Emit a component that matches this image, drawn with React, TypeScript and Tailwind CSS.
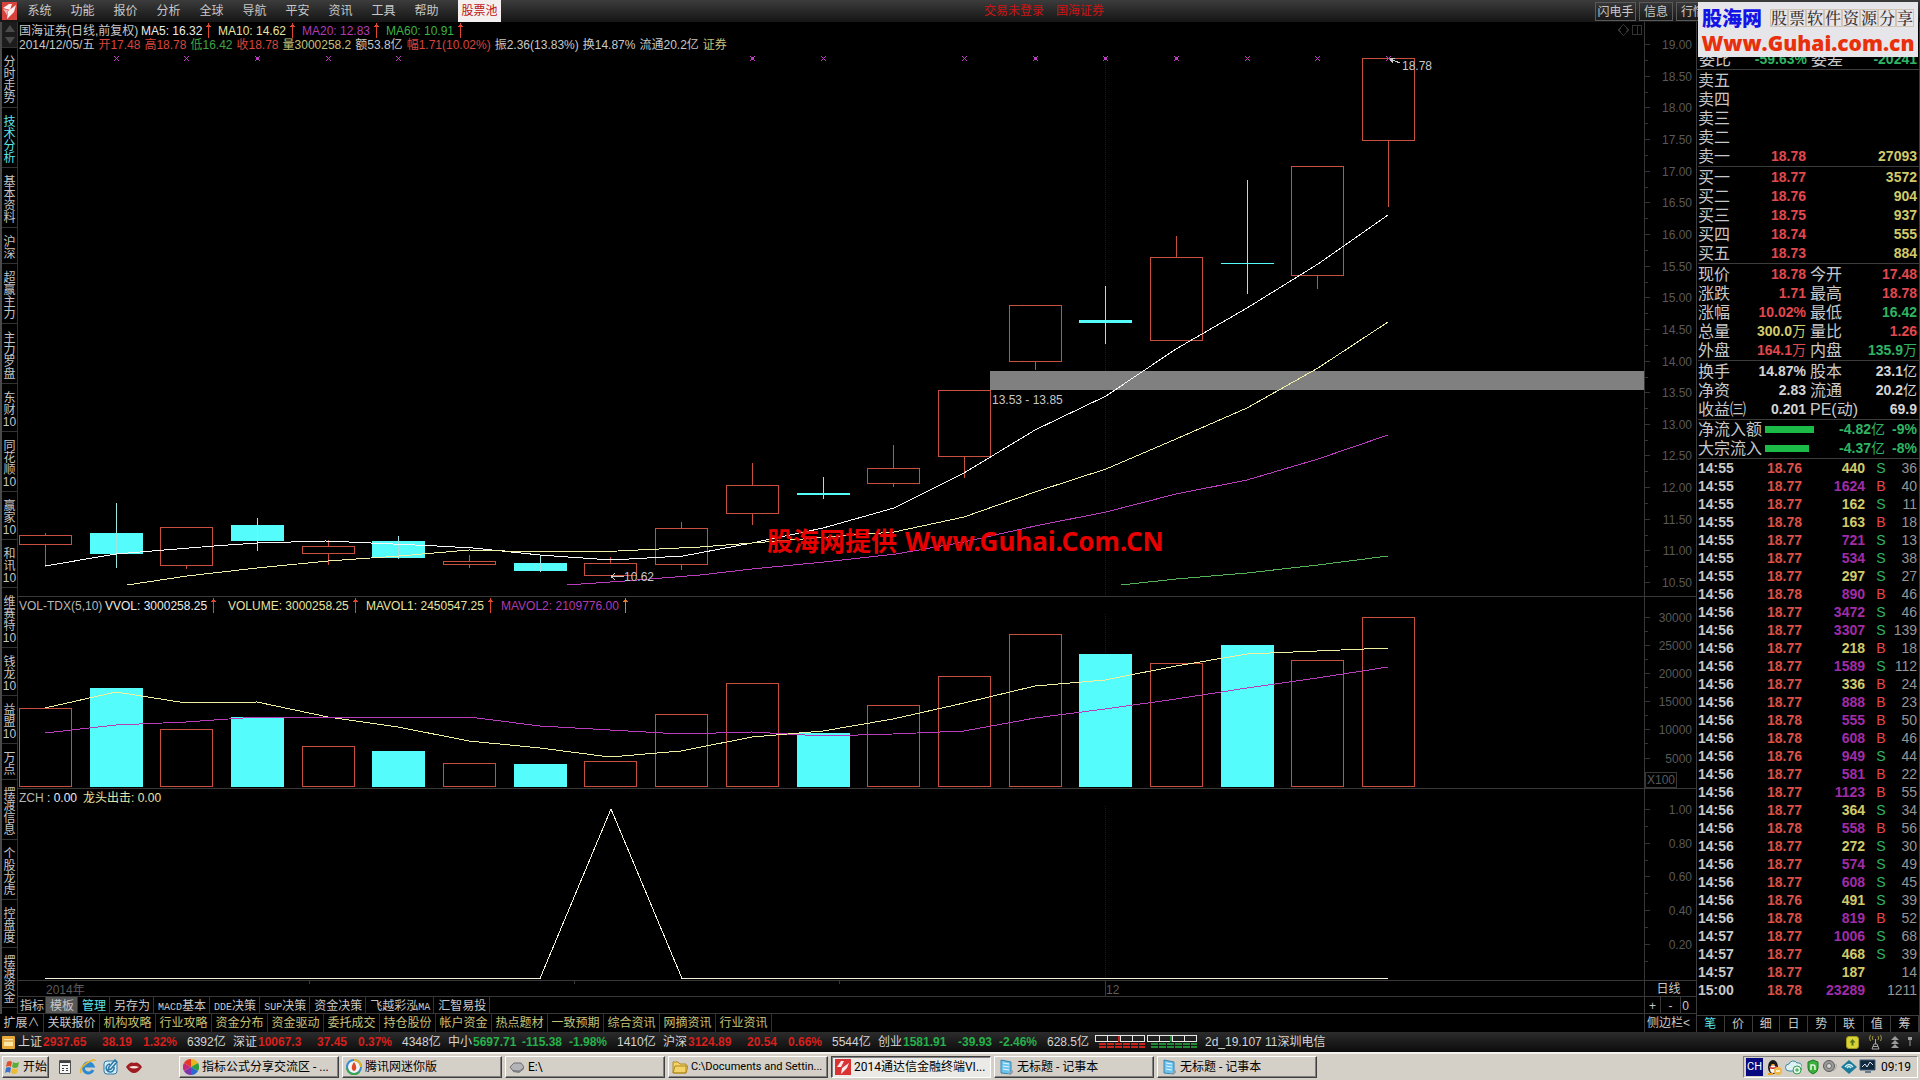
import * as React from 'react';

type Candle = { up: boolean; top: number; bottom: number; high: number; low: number; volTop: number };
type Point = [number, number];

const STEP = 70.7;
const centerOf = (i: number) => Math.floor(45.3 + STEP * i);

const candles: Candle[] = [
  { up: true, top: 535, bottom: 544, high: 533, low: 567, volTop: 708 },
  { up: false, top: 533, bottom: 554, high: 503, low: 568, volTop: 688 },
  { up: true, top: 527, bottom: 565, high: 527, low: 569, volTop: 729 },
  { up: false, top: 525, bottom: 541, high: 518, low: 551, volTop: 717 },
  { up: true, top: 546, bottom: 553, high: 540, low: 565, volTop: 746 },
  { up: false, top: 541, bottom: 558, high: 536, low: 559, volTop: 751 },
  { up: true, top: 561, bottom: 564, high: 555, low: 568, volTop: 763 },
  { up: false, top: 563, bottom: 571, high: 556, low: 572, volTop: 764 },
  { up: true, top: 563, bottom: 575, high: 557, low: 575, volTop: 761 },
  { up: true, top: 528, bottom: 564, high: 522, low: 570, volTop: 714 },
  { up: true, top: 485, bottom: 513, high: 463, low: 525, volTop: 683 },
  { up: false, top: 493, bottom: 495, high: 477, low: 499, volTop: 733 },
  { up: true, top: 468, bottom: 483, high: 445, low: 487, volTop: 705 },
  { up: true, top: 390, bottom: 456, high: 390, low: 478, volTop: 676 },
  { up: true, top: 305, bottom: 361, high: 305, low: 370, volTop: 634 },
  { up: false, top: 320, bottom: 323, high: 286, low: 344, volTop: 654 },
  { up: true, top: 257, bottom: 340, high: 236, low: 340, volTop: 663 },
  { up: false, top: 263, bottom: 264, high: 180, low: 294, volTop: 645 },
  { up: true, top: 166, bottom: 275, high: 166, low: 289, volTop: 660 },
  { up: true, top: 58, bottom: 140, high: 58, low: 207, volTop: 617 },
];

const ma5: Point[] = [[45, 566], [116, 554], [152, 551], [214, 546], [257, 543], [326, 541], [371, 543], [437, 546], [473, 548], [540, 555], [611, 560], [683, 556], [752, 543], [823, 528], [894, 508], [964, 473], [1035, 430], [1106, 396], [1176, 349], [1247, 308], [1318, 264], [1388, 215]];
const ma10: Point[] = [[127, 585], [187, 576], [257, 568], [328, 561], [399, 556], [469, 550], [540, 552], [618, 551], [700, 547], [752, 543], [841, 536], [894, 532], [964, 517], [1035, 492], [1106, 469], [1176, 439], [1247, 408], [1318, 368], [1388, 322]];
const ma20: Point[] = [[567, 585], [625, 581], [700, 575], [752, 569], [824, 562], [896, 554], [964, 542], [1035, 526], [1106, 512], [1176, 494], [1247, 480], [1318, 459], [1388, 435]];
const ma60: Point[] = [[1121, 585], [1176, 579], [1247, 573], [1318, 565], [1388, 556]];

const mavol1 = [708, 692, 703, 702, 717, 727, 741, 748, 757, 751, 737, 731, 719, 703, 686, 680, 666, 654, 651, 648];
const mavol2 = [733, 725, 722, 717, 717, 717, 717, 726, 730, 734, 732, 736, 734, 731, 718, 709, 699, 688, 678, 667];

const crossMarks = [
  { i: 1, bold: false }, { i: 2, bold: false }, { i: 3, bold: true }, { i: 4, bold: false }, { i: 5, bold: false },
  { i: 10, bold: true }, { i: 11, bold: false }, { i: 13, bold: false }, { i: 14, bold: true }, { i: 15, bold: true },
  { i: 16, bold: true }, { i: 17, bold: false }, { i: 18, bold: false }, { i: 19, bold: false },
];

const menus = ['系统', '功能', '报价', '分析', '全球', '导航', '平安', '资讯', '工具', '帮助'];

const railTabs = [
  ['分', '时', '走', '势'], ['技', '术', '分', '析'], ['基', '本', '资', '料'], ['沪', '深'], ['超', '赢', '主', '力'], ['主', '力', '罗', '盘'],
  ['东', '财', '10'], ['同', '花', '顺', '10'], ['赢', '家', '10'], ['和', '讯', '10'], ['维', '赛', '特', '10'], ['钱', '龙', '10'],
  ['益', '盟', '10'], ['万', '点'], ['摆', '渡', '信', '息'], ['个', '股', '龙', '虎'], ['控', '盘', '度'], ['摆', '渡', '资', '金'],
];

const templateTabs = ['指标', '模板', '管理', '另存为', 'MACD基本', 'DDE决策', 'SUP决策', '资金决策', '飞越彩泓MA', '汇智易投'];
const extensionTabs = ['关联报价', '机构攻略', '行业攻略', '资金分布', '资金驱动', '委托成交', '持仓股份', '帐户资金', '热点题材', '一致预期', '综合资讯', '网摘资讯', '行业资讯'];
const panelTabs = ['笔', '价', '细', '日', '势', '联', '值', '筹'];

const asks = [['卖五', '', ''], ['卖四', '', ''], ['卖三', '', ''], ['卖二', '', ''], ['卖一', '18.78', '27093']];
const bids = [['买一', '18.77', '3572'], ['买二', '18.76', '904'], ['买三', '18.75', '937'], ['买四', '18.74', '555'], ['买五', '18.73', '884']];

const RED = 'text-[#e2484e]';
const GREEN = 'text-[#2fb463]';
const YELLOW = 'text-[#d2ca6a]';
const WHITE = 'text-[#d4d4d4]';

const summary = [
  ['现价', '18.78', RED, '今开', '17.48', RED],
  ['涨跌', '1.71', RED, '最高', '18.78', RED],
  ['涨幅', '10.02%', RED, '最低', '16.42', GREEN],
  ['总量', '300.0万', YELLOW, '量比', '1.26', RED],
  ['外盘', '164.1万', RED, '内盘', '135.9万', GREEN],
];
const fundamentals = [
  ['换手', '14.87%', WHITE, '股本', '23.1亿', WHITE],
  ['净资', '2.83', WHITE, '流通', '20.2亿', WHITE],
  ['收益㈢', '0.201', WHITE, 'PE(动)', '69.9', WHITE],
];

const trades: [string, string, number, string, number][] = [
  ['14:55', '18.76', 440, 'S', 36], ['14:55', '18.77', 1624, 'B', 40], ['14:55', '18.77', 162, 'S', 11], ['14:55', '18.78', 163, 'B', 18],
  ['14:55', '18.77', 721, 'S', 13], ['14:55', '18.77', 534, 'S', 38], ['14:55', '18.77', 297, 'S', 27], ['14:56', '18.78', 890, 'B', 46],
  ['14:56', '18.77', 3472, 'S', 46], ['14:56', '18.77', 3307, 'S', 139], ['14:56', '18.77', 218, 'B', 18], ['14:56', '18.77', 1589, 'S', 112],
  ['14:56', '18.77', 336, 'B', 24], ['14:56', '18.77', 888, 'B', 23], ['14:56', '18.78', 555, 'B', 50], ['14:56', '18.78', 608, 'B', 46],
  ['14:56', '18.76', 949, 'S', 44], ['14:56', '18.77', 581, 'B', 22], ['14:56', '18.77', 1123, 'B', 55], ['14:56', '18.77', 364, 'S', 34],
  ['14:56', '18.78', 558, 'B', 56], ['14:56', '18.77', 272, 'S', 30], ['14:56', '18.77', 574, 'S', 49], ['14:56', '18.77', 608, 'S', 45],
  ['14:56', '18.76', 491, 'S', 39], ['14:56', '18.78', 819, 'B', 52], ['14:57', '18.77', 1006, 'S', 68], ['14:57', '18.77', 468, 'S', 39],
  ['14:57', '18.77', 187, '', 14], ['15:00', '18.78', 23289, '', 1211],
];

const indices = [
  { name: '上证', value: '2937.65', change: '38.19', pct: '1.32%', amount: '6392亿', up: true },
  { name: '深证', value: '10067.3', change: '37.45', pct: '0.37%', amount: '4348亿', up: true },
  { name: '中小', value: '5697.71', change: '-115.38', pct: '-1.98%', amount: '1410亿', up: false },
  { name: '沪深', value: '3124.89', change: '20.54', pct: '0.66%', amount: '5544亿', up: true },
  { name: '创业', value: '1581.91', change: '-39.93', pct: '-2.46%', amount: '628.5亿', up: false },
];

const toPoints = (points: Point[]) => points.map(p => p.join(',')).join(' ');
const bySlot = (values: number[]): Point[] => values.map((y, i) => [centerOf(i), y]);

function UpArrow({ className = 'text-[#e0452e]' }: { className?: string }) {
  return (
    <svg width="5" height="15" viewBox="0 0 5 15" className={className} shapeRendering="crispEdges" aria-hidden="true">
      <path d="M2 0h1v15h-1zM1 2h3v1h-3zM0 3h5v1h-5z" fill="currentColor" />
    </svg>
  );
}

// Latin runs are set in half-width cells, like the terminal's bitmap font
function HalfWidth({ text }: { text: string }) {
  return (
    <>
      {text.split(/([A-Z]+)/).map((part, i) =>
        /[A-Z]/.test(part) ? <span key={i} className="font-['Liberation_Mono',monospace] text-[10px]">{part}</span> : part,
      )}
    </>
  );
}

function Line({ points, color }: { points: Point[]; color: string }) {
  return <polyline points={toPoints(points)} fill="none" stroke={color} strokeWidth="1" />;
}

function PriceChart() {
  return (
    <svg className="block h-full w-full" viewBox="18 22 1626 574" preserveAspectRatio="none" shapeRendering="crispEdges">
      <line x1="1105.5" y1="60" x2="1105.5" y2="597" stroke="#161c16" strokeDasharray="1 1" />
      <rect x="990" y="371" width="654" height="19" fill="#808080" />
      {candles.map((c, i) => {
        const x = centerOf(i);
        if (!c.up) {
          return (
            <g key={i} fill="#54fcfc">
              <rect x={x - 26} y={c.top} width="53" height={c.bottom - c.top} />
              <rect x={x} y={c.high} width="1" height={c.low - c.high} fill="#9ae6e4" />
            </g>
          );
        }
        return (
          <g key={i} fill="none" stroke="#c8503f">
            <rect x={x - 25.5} y={c.top + 0.5} width="52" height={c.bottom - c.top} />
            <path d={`M${x + 0.5} ${c.high}V${c.top}M${x + 0.5} ${c.bottom}V${c.low}`} />
          </g>
        );
      })}
      <Line points={ma5} color="#f8f8f8" />
      <Line points={ma10} color="#f0f0a8" />
      <Line points={ma20} color="#b83cbc" />
      <Line points={ma60} color="#52b456" />
      {crossMarks.map(({ i, bold }) => (
        <path key={i} d={`M${centerOf(i) - 2} 56l5 5m0-5l-5 5${bold ? 'm1 -2.500h3m-1.500 -1.500v3' : ''}`} stroke="#c03cc4" />
      ))}
      <path d="M1390 59l10 4M1390 59l3 4M1390 59l5 -1" stroke="#c8c8c8" fill="none" />
      <path d="M611 576.5h13M611 576.5l4 -3M611 576.5l4 3" stroke="#c8c8c8" fill="none" />
      <g className="font-['Liberation_Sans',sans-serif] text-[12px]" fill="#c8c8c8">
        <text x="1402" y="70">18.78</text>
        <text x="992" y="404">13.53 - 13.85</text>
        <text x="624" y="581">10.62</text>
      </g>
      <g className="font-['Noto_Sans','Noto_Sans_CJK_SC',sans-serif] text-[26px] font-bold" fill="#e80000">
        <text x="767" y="551">股海网提供</text>
        <text x="905" y="551">Www.Guhai.Com.CN</text>
      </g>
      <g fill="none" stroke="#333333">
        <path d="M1623.500 24.500l5 5.500l-5 5.500l-5 -5.500z" />
        <path d="M1632.500 25.500h9v9h-9zM1637.500 25.500v9" />
      </g>
    </svg>
  );
}

function VolumeChart() {
  return (
    <svg className="block h-full w-full" viewBox="18 597 1626 191" preserveAspectRatio="none" shapeRendering="crispEdges">
      <line x1="1105.5" y1="614" x2="1105.5" y2="789" stroke="#161c16" strokeDasharray="1 1" />
      {candles.map((c, i) => {
        const x = centerOf(i);
        return c.up
          ? <rect key={i} x={x - 25.5} y={c.volTop + 0.5} width="52" height={786 - c.volTop} fill="none" stroke="#c8503f" />
          : <rect key={i} x={x - 26} y={c.volTop} width="53" height={787 - c.volTop} fill="#54fcfc" />;
      })}
      <Line points={bySlot(mavol1)} color="#f0f0a0" />
      <Line points={bySlot(mavol2)} color="#b83cbc" />
    </svg>
  );
}

function SignalChart() {
  return (
    <svg className="block h-full w-full" viewBox="18 789 1626 191" preserveAspectRatio="none" shapeRendering="crispEdges">
      <line x1="1105.5" y1="806" x2="1105.5" y2="981" stroke="#161c16" strokeDasharray="1 1" />
      <Line points={[[45, 978.5], [540, 978.5], [611, 809], [682, 978.5], [1388, 978.5]]} color="#f8f4dc" />
    </svg>
  );
}

function Axis({ top, height, first, gap, labels }: { top: number; height: number; first: number; gap: number; labels: string[] }) {
  const half = Math.round(gap / 2);
  return (
    <svg className="block h-full w-full" viewBox={`0 ${top} 51 ${height}`} preserveAspectRatio="none">
      <g stroke="#343434" shapeRendering="crispEdges">
        {labels.map((label, i) => {
          const y = Math.round(first + gap * i) + 0.5;
          return <path key={label} d={`M0 ${y}h5M0 ${y + half}h3`} />;
        })}
      </g>
      <g className="font-['Liberation_Sans',sans-serif] text-[12px]" fill="#595959" textAnchor="end">
        {labels.map((label, i) => <text key={label} x="47" y={Math.round(first + gap * i) + 5}>{label}</text>)}
      </g>
    </svg>
  );
}

function Pane({ className, legend, chart, axis }: { className: string; legend: React.ReactNode; chart: React.ReactNode; axis: React.ReactNode }) {
  return (
    <section className={`flex ${className}`}>
      <div className="relative min-w-0 flex-1 border-b border-[#383838]">
        {chart}
        <div className="absolute top-0 left-0 pl-px whitespace-nowrap">{legend}</div>
      </div>
      <div className="relative w-13 shrink-0 border-b border-l border-[#383838]">{axis}</div>
    </section>
  );
}

function SideRail() {
  return (
    <nav className="flex w-[18px] shrink-0 flex-col overflow-hidden border-r border-l-2 border-[#333333] border-l-[#4a4a4a] text-[12px] leading-3 text-[#c4c4c4]">
      <div className="flex h-[26px] shrink-0 flex-col items-center justify-around border-b border-[#333333] bg-[#1c1c1c]">
        <button type="button" aria-label="Up" className="border-x-5 border-b-7 border-x-transparent border-b-[#4a4a4a]" />
        <button type="button" aria-label="Down" className="border-x-5 border-t-7 border-x-transparent border-t-[#4a4a4a]" />
      </div>
      {railTabs.map((chars, i) => (
        <button
          key={chars.join('')}
          type="button"
          className={`flex shrink-0 flex-col items-center border-b border-[#333333] pt-2 pb-[3px] ${i === 1 ? 'text-[#5ce4ec]' : ''}`}
        >
          {chars.map((ch, j) => <span key={j}>{ch}</span>)}
        </button>
      ))}
    </nav>
  );
}

function PriceLegend() {
  return (
    <div className="pt-px text-[12px] leading-[14px] text-[#c8c8c8]">
      <div className="flex items-center">
        <span className="w-[122px]">国海证券(日线,前复权)</span>
        <span className="flex w-[77px] items-center gap-1 text-[#ececec]">MA5: 16.32<UpArrow /></span>
        <span className="flex w-[84px] items-center gap-1 text-[#e6e4a4]">MA10: 14.62<UpArrow /></span>
        <span className="flex w-[84px] items-center gap-1 text-[#b03cb4]">MA20: 12.83<UpArrow /></span>
        <span className="flex items-center gap-1 text-[#3fb244]">MA60: 10.91<UpArrow /></span>
      </div>
      <div className="flex gap-1">
        <span>2014/12/05/五</span>
        <span className="text-[#d8463e]">开17.48</span>
        <span className="text-[#d8463e]">高18.78</span>
        <span className="text-[#3fa244]">低16.42</span>
        <span className="text-[#d8463e]">收18.78</span>
        <span className="text-[#c6c07c]">量3000258.2</span>
        <span>额53.8亿</span>
        <span className="text-[#d8463e]">幅1.71(10.02%)</span>
        <span>振2.36(13.83%)</span>
        <span>换14.87%</span>
        <span>流通20.2亿</span>
        <span className="text-[#c6c07c]">证券</span>
      </div>
    </div>
  );
}

function VolumeLegend() {
  return (
    <div className="flex items-center pt-px text-[12px] leading-[14px] text-[#b8b8b8]">
      <span className="w-[86px]">VOL-TDX(5,10)</span>
      <span className="flex w-[123px] items-center gap-1 text-[#ececec]">VVOL: 3000258.25<UpArrow /></span>
      <span className="flex w-[138px] items-center gap-1 text-[#e6e4a4]">VOLUME: 3000258.25<UpArrow /></span>
      <span className="flex w-[135px] items-center gap-1 text-[#e6e4a4]">MAVOL1: 2450547.25<UpArrow /></span>
      <span className="flex items-center gap-1 text-[#b03cb4]">MAVOL2: 2109776.00<UpArrow className="text-[#e07a2e]" /></span>
    </div>
  );
}

// Unit characters stay light beside the bold digits
function Figure({ text }: { text: string }) {
  const unit = text.match(/[万亿]$/)?.[0];
  return <>{unit ? text.slice(0, -1) : text}{unit && <span className="font-normal">{unit}</span>}</>;
}

function Figures({ rows }: { rows: string[][] }) {
  return (
    <dl className="border-b border-[#3c3c3c] pt-px">
      {rows.map(([a, av, ac, b, bv, bc]) => (
        <div key={a} className="flex h-[19px] items-center pr-0.5 whitespace-nowrap">
          <dt className="w-12 text-[16px]">{a}</dt>
          <dd className={`w-[60px] text-right text-[14px] font-bold ${ac}`}><Figure text={av} /></dd>
          <dt className="ml-1 w-12 text-[16px]">{b}</dt>
          <dd className={`flex-1 text-right text-[14px] font-bold ${bc}`}><Figure text={bv} /></dd>
        </div>
      ))}
    </dl>
  );
}

function OrderBook({ rows, label }: { rows: string[][]; label: string }) {
  return (
    <div className="border-b border-[#3c3c3c] pt-px">
      <table aria-label={label} className="w-full table-fixed">
        <tbody>
          {rows.map(([name, price, volume]) => (
            <tr key={name} className="h-[19px] leading-[19px]">
              <th className="w-12 p-0 text-left text-[16px] font-normal">{name}</th>
              <td className="w-[60px] p-0 text-right text-[14px] font-bold text-[#e2484e]">{price}</td>
              <td className="p-0 pr-0.5 text-right text-[14px] font-bold text-[#d2ca6a]">{volume}</td>
            </tr>
          ))}
        </tbody>
      </table>
    </div>
  );
}

function FlowRow({ name, width, amount, pct }: { name: string; width: number; amount: string; pct: string }) {
  return (
    <div className="flex h-[19px] items-center pr-0.5 text-[14px] font-bold whitespace-nowrap text-[#2fb463]">
      <span className="w-[67px] text-[16px] font-normal text-[#c8c8c8]">{name}</span>
      <span className="h-[7px] bg-[#1cba46]" style={{ width }} />
      <span className="ml-auto"><Figure text={amount} /></span>
      <span className="w-8 text-right">{pct}</span>
    </div>
  );
}

function QuotePanel() {
  return (
    <aside className="flex w-56 shrink-0 flex-col border-r border-l border-[#3c3c3c] text-[#c8c8c8]">
      <div className="flex h-12 items-end border-b border-[#3c3c3c] px-0.5">
        <div className="flex w-full items-center text-[14px] leading-[19px] font-bold text-[#2fb463]">
          <span className="w-12 text-[16px] font-normal text-[#c8c8c8]">委比</span>
          <span className="w-[60px] text-right">-59.63%</span>
          <span className="ml-1 text-[16px] font-normal text-[#c8c8c8]">委差</span>
          <span className="ml-auto">-20241</span>
        </div>
      </div>
      <div className="flex flex-1 flex-col pl-px">
        <OrderBook rows={asks} label="卖盘" />
        <OrderBook rows={bids} label="买盘" />
        <Figures rows={summary} />
        <Figures rows={fundamentals} />
        <div className="border-b border-[#3c3c3c]">
          <FlowRow name="净流入额" width={49} amount="-4.82亿" pct="-9%" />
          <FlowRow name="大宗流入" width={44} amount="-4.37亿" pct="-8%" />
        </div>
        <table aria-label="成交明细" className="w-full table-fixed text-[14px] font-bold">
          <tbody>
            {trades.map(([time, price, volume, side, count], i) => (
              <tr key={i} className="h-[18px] leading-[18px]">
                <td className="w-12 p-0">{time}</td>
                <td className="w-14 p-0 text-right text-[#dc5048]">{price}</td>
                <td className={`w-[63px] p-0 text-right ${volume >= 500 ? 'text-[#a02ca8]' : 'text-[#d2ca6a]'}`}>{volume}</td>
                <td className={`w-8 p-0 text-center font-normal ${side === 'B' ? 'text-[#e2484e]' : 'text-[#2fb463]'}`}>{side}</td>
                <td className="p-0 pr-0.5 text-right font-normal text-[#969696]"><span className="-ml-4">{count}</span></td>
              </tr>
            ))}
          </tbody>
        </table>
      </div>
      <div className="flex h-[17px] border-t border-[#3c3c3c] text-[12px] leading-4">
        {panelTabs.map((tab, i) => (
          <button key={tab} type="button" className={`flex-1 border-r border-[#3c3c3c] ${i === 0 ? 'text-[#5ce4ec]' : ''}`}>{tab}</button>
        ))}
      </div>
    </aside>
  );
}

function SiteBanner() {
  return (
    <div className="absolute top-0.5 right-0.5 flex h-[55px] w-[220px] flex-col justify-between bg-[#e6e6ea] px-0.5 pt-1 pb-0.5 whitespace-nowrap">
      <div className="flex items-center justify-between px-0.5">
        <span className="font-['Noto_Sans_CJK_SC',sans-serif] text-[20px] leading-6 font-black text-[#1414e6]">股海网</span>
        <span className="flex font-['Noto_Serif_CJK_SC','Noto_Sans_CJK_SC',serif] text-[16px] leading-[18px] font-medium text-[#3a3434]">
          {'股票软件资源分享'.split('').map(ch => <span key={ch} className="w-[18px] border border-[#d2c4b4] text-center leading-4">{ch}</span>)}
        </span>
      </div>
      <a href="#" className="text-center font-['Open_Sans',sans-serif] text-[21px] leading-6 font-extrabold text-[#e8300c]">Www.Guhai.com.cn</a>
    </div>
  );
}

function MeterBlock({ fill }: { fill: string }) {
  return (
    <svg width="50" height="14" viewBox="0 0 50 14" shapeRendering="crispEdges" aria-hidden="true">
      <path d="M.5 .5h49v6h-49zM12.500 .5v6M25.500 .5v6M37.500 .5v6" fill="none" stroke="#e8e8e8" />
      <path d="M23 1h2v6h-2z" fill={fill} />
      <path d="M4 9h46M4 12h46" stroke={fill} strokeWidth="2" strokeDasharray="7 1" />
    </svg>
  );
}

function StatusBar() {
  return (
    <footer className="flex h-5 shrink-0 items-center bg-linear-to-b from-[#2c2c2c] to-[#0c0c0c] pl-0.5 text-[12px] whitespace-nowrap text-[#d4d4d4]">
      <svg width="13" height="13" viewBox="0 0 13 13" className="mr-[3px]" aria-hidden="true">
        <rect width="13" height="13" rx="1" fill="#e8a83a" />
        <rect x="2" y="3" width="9" height="7" fill="#fbe6a4" />
        <path d="M2 5h9" stroke="#d08a20" />
      </svg>
      {indices.map(q => (
        <div key={q.name} className={`grid w-[215px] grid-cols-[25px_46px_43px_45px_1fr] text-right font-bold ${q.up ? 'text-[#d8201c]' : 'text-[#26b04a]'}`}>
          <span className="text-left font-normal text-[#d4d4d4]">{q.name}</span>
          <span className="text-left">{q.value}</span>
          <span>{q.change}</span>
          <span>{q.pct}</span>
          <span className="pl-2.5 text-left font-normal text-[#d4d4d4]">{q.amount}</span>
        </div>
      ))}
      <div className="ml-0.5 flex items-center gap-0.5">
        <MeterBlock fill="#c8241c" />
        <MeterBlock fill="#1f8a34" />
      </div>
      <span className="ml-2">2d_19.107 11深圳电信</span>
      <div className="ml-auto flex items-center gap-2 pr-2">
        <svg width="13" height="13" viewBox="0 0 13 13" aria-hidden="true" className="mr-0.5">
          <rect x=".5" y=".5" width="12" height="12" rx="2.500" fill="#d8d436" stroke="#a09a20" />
          <path d="M6.500 3l3 3.500h-2v3h-2v-3h-2z" fill="#56701c" />
        </svg>
        <svg width="13" height="16" viewBox="0 0 13 16" fill="none" stroke="#a8a8a8" aria-hidden="true">
          <path d="M6.500 5v5M5 10h3l2 5h-7zM4 12.500h5" />
          <path d="M4 2q-1.500 2 0 4M9 2q1.500 2 0 4M1.500 1q-2 3 0 6M11.500 1q2 3 0 6" stroke="#a09440" />
        </svg>
        <svg width="10" height="14" viewBox="0 0 10 14" fill="#9a9a9a" aria-hidden="true">
          <path d="M5 1l4 4h-8zM5 5l4 4h-8zM5 9l4 4h-8z" />
        </svg>
        <svg width="4" height="12" viewBox="0 0 4 12" fill="#9a9a9a" aria-hidden="true">
          <path d="M0 1h4v3h-4zM1.500 4h1v6h-1z" />
        </svg>
      </div>
    </footer>
  );
}

const taskIcons: Record<string, React.ReactNode> = {
  pinwheel: (
    <>
      <path d="M8 8V0a8 8 0 0 1 7 4z" fill="#e8b420" />
      <path d="M8 8l7-4a8 8 0 0 1 0 8z" fill="#2e9e3e" />
      <path d="M8 8l7 4a8 8 0 0 1-7 4z" fill="#2a6ad0" />
      <path d="M8 8v8a8 8 0 0 1-7-4z" fill="#7a36b0" />
      <path d="M8 8l-7 4a8 8 0 0 1 0-8z" fill="#c62a7a" />
      <path d="M8 8L1 4a8 8 0 0 1 7-4z" fill="#e03a24" />
    </>
  ),
  tencent: (
    <>
      <circle cx="8" cy="8" r="7" fill="#f4f4f4" stroke="#3a8ad0" strokeWidth="2" />
      <path d="M1 9a7 7 0 0 0 12 4" fill="none" stroke="#3ba648" strokeWidth="2" />
      <path d="M8 1a7 7 0 0 1 7 7" fill="none" stroke="#e8b420" strokeWidth="2" />
      <path d="M8 3c3 4 3 8 0 9c-3-1-3-5 0-9z" fill="#e04828" />
    </>
  ),
  drive: (
    <>
      <path d="M1 8l4-4h7l3 4-4 4h-7z" fill="#b4b4b8" stroke="#707074" />
      <path d="M4 11l6 1 5-4v2l-5 4-6-1z" fill="#7c7c82" />
    </>
  ),
  folder: <path d="M1 3h5l2 2h6v9H1z M3 7h13l-2 7H1z" fill="#f4d468" stroke="#b08a20" />,
  tdx: (
    <>
      <rect width="16" height="16" fill="#d83434" />
      <path d="M2 8l4-6h3l-3 6zM7 9l7-5-2 5-6 6z" fill="#fbeaea" />
    </>
  ),
  notepad: (
    <>
      <path d="M3 1l10 2v12l-10-1z" fill="#6cc4ec" stroke="#3a84b0" />
      <path d="M5 4l6 1M5 7l6 1M5 10l6 1" stroke="#e8f6fc" />
      <path d="M9 15l6-1v-3z" fill="#a0a0a8" />
    </>
  ),
};

const tasks = [
  { icon: 'pinwheel', title: '指标公式分享交流区 - ...' },
  { icon: 'tencent', title: '腾讯网迷你版' },
  { icon: 'drive', title: 'E:\\' },
  { icon: 'folder', title: 'C:\\Documents and Settin...', latin: true },
  { icon: 'tdx', title: '2014通达信金融终端VI...', active: true },
  { icon: 'notepad', title: '无标题 - 记事本' },
  { icon: 'notepad', title: '无标题 - 记事本' },
];

const RAISED = 'border border-[#404040] border-t-white border-l-white shadow-[inset_-1px_-1px_0_#808080]';
const SUNKEN = 'border border-white border-t-[#404040] border-l-[#404040] bg-[#eceae6] shadow-[inset_1px_1px_0_#808080]';

function Taskbar() {
  return (
    <div className="flex h-7 shrink-0 items-center border-t-2 border-[#f4f2ee] bg-[#d4d0c8] px-0.5 font-['Roboto','Noto_Sans_CJK_SC',sans-serif] text-[12px] text-black">
      <button type="button" className={`flex h-[22px] w-[47px] items-center gap-0.5 pl-0.5 ${RAISED}`}>
        <svg width="16" height="16" viewBox="0 0 16 16" aria-hidden="true">
          <path d="M2 3q3-2 5 0l-1 5q-2-2-5 0z" fill="#e0502c" />
          <path d="M8 3q3 2 6 0l-1 5q-3 2-6 0z" fill="#5cae3a" />
          <path d="M1 9q3-2 5 0l-1 5q-2-2-5 0z" fill="#3a72c8" />
          <path d="M7 9q3 2 6 0l-1 5q-3 2-6 0z" fill="#ecbc34" />
        </svg>
        开始
      </button>
      <div className="flex w-[130px] items-center gap-[7px] pl-2">
        <svg width="16" height="16" viewBox="0 0 16 16" aria-hidden="true">
          <path d="M2.500 1.500h11v13h-11z" fill="#f6f6f6" stroke="#505050" />
          <path d="M3 3h10" stroke="#404040" strokeWidth="2" />
          <path d="M5 6.500h6M5 9.500h2M9 9.500h2M5 11.500h2M9 11.500h2" stroke="#404040" />
        </svg>
        <svg width="16" height="16" viewBox="0 0 16 16" fill="none" aria-hidden="true">
          <path d="M13 11a5 5 0 1 1 0-4H4" stroke="#2c8ad0" strokeWidth="3" />
          <path d="M1 14Q-1 9 7 4t8-2" stroke="#e8b42c" strokeWidth="1.500" />
        </svg>
        <svg width="16" height="16" viewBox="0 0 16 16" aria-hidden="true">
          <rect x="1" y="2" width="13" height="13" rx="3" fill="#d8ecf6" stroke="#2c7aa8" />
          <path d="M5 11l1-3 6-7 2 2-6 7zM11 8a4 4 0 1 1-4-3" fill="none" stroke="#2c7aa8" strokeWidth="1.500" />
        </svg>
        <svg width="16" height="16" viewBox="0 0 16 16" aria-hidden="true">
          <path d="M0 8q4-6 8-4q4-2 8 4q-4 6-8 6t-8-6z" fill="#a01c20" />
          <path d="M3 8q5-2 10 0q-5 3-10 0z" fill="#f4e4e0" />
        </svg>
      </div>
      <div className="flex min-w-0 flex-1 gap-[3px]">
        {tasks.map((task, i) => (
          <button key={i} type="button" className={`flex h-[22px] w-40 min-w-0 items-center gap-[3px] pl-[3px] text-left whitespace-nowrap ${task.active ? SUNKEN : RAISED}`}>
            <svg width="16" height="16" viewBox="0 0 16 16" className="shrink-0" aria-hidden="true">{taskIcons[task.icon]}</svg>
            <span className={`overflow-hidden ${task.latin ? 'text-[11px]' : ''}`}>{task.title}</span>
          </button>
        ))}
      </div>
      <div className="flex h-[22px] items-center gap-px border border-white border-t-[#808080] border-l-[#808080] pr-1.5 pl-0.5">
        <span className="grid h-[18px] w-[17px] place-items-center bg-[#0a0a80] text-[11px] text-white">CH</span>
        <svg width="16" height="16" viewBox="0 0 16 16" className="ml-0.5" aria-hidden="true">
          <ellipse cx="7" cy="8" rx="5" ry="7" fill="#181818" />
          <ellipse cx="7" cy="10" rx="3" ry="4" fill="#f4f4f4" />
          <path d="M3 7q4 3 8 0v2q-4 2-8 0z" fill="#d82c20" />
          <path d="M5 5h4l-2 2zM2 14h5v2h-5z" fill="#f0a020" />
          <circle cx="12" cy="12" r="4" fill="#f0b848" />
          <path d="M10 12h4" stroke="#fff" strokeWidth="1.500" />
        </svg>
        <svg width="17" height="16" viewBox="0 0 17 16" className="ml-0.5" aria-hidden="true">
          <path d="M4 12a3.500 3.500 0 0 1 0-7a4.500 4.500 0 0 1 8-1a4 4 0 0 1 2 8z" fill="#dff0f4" stroke="#3a8aa0" />
          <circle cx="12" cy="11" r="4" fill="#e8f8ea" stroke="#2e9e4e" />
          <path d="M10 11h4M12 9v4" stroke="#2e9e4e" />
        </svg>
        <svg width="16" height="16" viewBox="0 0 16 16" className="ml-0.5" aria-hidden="true">
          <path d="M8 1l5 2v6q0 4-5 6q-5-2-5-6V3z" fill="#3cb03c" stroke="#1f7a24" />
          <path d="M6 11V6h2q2 0 2 2v3" fill="none" stroke="#e8f8e8" strokeWidth="1.500" />
        </svg>
        <svg width="16" height="16" viewBox="0 0 16 16" aria-hidden="true">
          <circle cx="7" cy="7" r="5.500" fill="#9a9a9a" stroke="#5c5c5c" />
          <circle cx="7" cy="7" r="2.500" fill="#d8d8d8" stroke="#6a6a6a" />
          <path d="M11 12q4-2 3-7" fill="none" stroke="#a8a8a8" />
        </svg>
        <svg width="17" height="16" viewBox="0 0 17 16" className="ml-0.5" aria-hidden="true">
          <path d="M8 1l8 7-8 7-8-7z" fill="#1a7a9a" />
          <path d="M4 8q4-5 8 0M6 9q2-3 4 0" fill="none" stroke="#d4f0f8" strokeWidth="1.500" />
        </svg>
        <svg width="17" height="16" viewBox="0 0 17 16" aria-hidden="true">
          <path d="M1 1h15v10h-15z" fill="#14283c" stroke="#3a5a7a" />
          <path d="M3 8l3-3 2 3 3-5 3 3" fill="none" stroke="#d4e4f4" />
          <path d="M6 12h6v2h-6z" fill="#6a7c8c" />
        </svg>
        <span className="ml-1">09:19</span>
      </div>
    </div>
  );
}

const priceLabels = Array.from({ length: 18 }, (_, i) => (19 - i * 0.5).toFixed(2));
const volumeLabels = ['30000', '25000', '20000', '15000', '10000', '5000'];
const signalLabels = ['1.00', '0.80', '0.60', '0.40', '0.20'];

export default function App() {
  return (
    <div className="relative flex h-screen flex-col overflow-hidden bg-black font-['Liberation_Sans','Noto_Sans_CJK_SC',sans-serif] text-[12px] text-[#c8c8c8]">
      <header className="flex h-[22px] shrink-0 items-center bg-linear-to-b from-[#3c3c3c] to-[#161616] text-[12px] whitespace-nowrap">
        <svg width="15" height="18" viewBox="0 0 15 18" className="ml-0.5" aria-hidden="true">
          <rect width="15" height="18" fill="#d4443c" />
          <path d="M1 6l6-4h3l-2 6zM6 9l8-6-2 7-7 7z" fill="#fbeeee" />
          <path d="M1 7l5 1-1 5z" fill="#f2b4ae" />
        </svg>
        <nav className="flex h-full items-center pl-px">
          {menus.map(menu => <button key={menu} type="button" className="w-[43px]">{menu}</button>)}
          <button type="button" className="ml-2.5 h-full w-[43px] bg-[#f4f0f0] text-[#c01414]">股票池</button>
        </nav>
        <div className="flex flex-1 justify-center gap-3 pr-2 text-[#cc1414]">
          <span>交易未登录</span>
          <span>国海证券</span>
        </div>
        <div className="mr-[210px] flex h-full items-center gap-[3px]">
          <button type="button" className="h-[19px] w-[41px] border border-[#5a5a5a]">闪电手</button>
          <button type="button" className="h-[19px] w-[34px] border border-[#5a5a5a]">信息</button>
          <button type="button" className="h-[19px] w-[34px] border border-[#5a5a5a]">行情</button>
        </div>
      </header>

      <div className="flex min-h-0 flex-1">
        <div className="flex min-w-0 flex-1 flex-col">
          <div className="flex min-h-0 flex-1">
            <SideRail />
            <main className="flex min-w-0 flex-1 flex-col">
              <Pane
                className="min-h-0 flex-1"
                legend={<PriceLegend />}
                chart={<PriceChart />}
                axis={<Axis top={22} height={574} first={44} gap={31.65} labels={priceLabels} />}
              />
              <Pane
                className="h-48 shrink-0"
                legend={<VolumeLegend />}
                chart={<VolumeChart />}
                axis={(
                  <>
                    <Axis top={597} height={191} first={617} gap={28.1} labels={volumeLabels} />
                    <span className="absolute bottom-0 left-0 border border-[#383838] px-px leading-[14px] text-[#595959]">X100</span>
                  </>
                )}
              />
              <Pane
                className="h-48 shrink-0"
                legend={(
                  <div className="flex gap-1.5 pt-0.5 leading-[14px] text-[#ececec]">
                    <span><span className="text-[#b8b8b8]">ZCH</span> : 0.00</span>
                    <span className="text-[#e6e4a4]">龙头出击: 0.00</span>
                  </div>
                )}
                chart={<SignalChart />}
                axis={<Axis top={789} height={191} first={809} gap={33.7} labels={signalLabels} />}
              />
              <div className="flex h-4 shrink-0 border-b border-[#383838] leading-4 text-[#5c5c5c]">
                <svg className="block h-full min-w-0 flex-1" viewBox="18 981 1626 15" preserveAspectRatio="none">
                  <path d="M309.500 981v3M574.500 981v3M839.500 981v3M1105.500 981v16" stroke="#383838" shapeRendering="crispEdges" />
                  <g className="font-['Liberation_Sans','Noto_Sans_CJK_SC',sans-serif] text-[12px]" fill="#5c5c5c">
                    <text x="46" y="994">2014年</text>
                    <text x="1106" y="994">12</text>
                  </g>
                </svg>
                <div className="w-13 border-l border-[#383838] pr-1 text-center text-[#c8c8c8]">日线</div>
              </div>
              <div className="flex h-[17px] shrink-0 border-b border-[#383838] leading-[18px]">
                <div className="flex flex-1">
                  {templateTabs.map((tab, i) => (
                    <button
                      key={tab}
                      type="button"
                      className={`border-r border-[#333333] whitespace-nowrap ${i === 0 ? 'pr-px pl-0.5' : 'pr-[3px] pl-1'} ${i === 1 ? 'bg-[#565656]' : ''} ${i === 2 ? 'text-[#5ce4ec]' : ''}`}
                    >
                      <HalfWidth text={tab} />
                    </button>
                  ))}
                </div>
                <div className="flex w-13 border-l border-[#383838]">
                  <button type="button" aria-label="Zoom in" className="w-4 border-r border-[#383838]">+</button>
                  <button type="button" aria-label="Zoom out" className="w-5 border-r border-[#383838]">-</button>
                  <button type="button" className="flex-1 pr-1.5">0</button>
                </div>
              </div>
            </main>
          </div>
          <div className="flex h-[18px] shrink-0 leading-[18px]">
            <div className="flex min-w-0 flex-1 text-[#c6c07c]">
              <button type="button" className="w-11 border-r border-[#333333] text-[#c8c8c8]">扩展∧</button>
              {extensionTabs.map((tab, i) => (
                <button key={tab} type="button" className={`w-14 border-r border-[#2c2c40] ${i === 0 ? 'text-[#c8c8c8]' : ''}`}>{tab}</button>
              ))}
            </div>
            <button type="button" className="w-13 border-l border-[#383838] pr-1 text-center whitespace-nowrap">侧边栏&lt;</button>
          </div>
        </div>
        <QuotePanel />
      </div>

      <StatusBar />
      <Taskbar />
      <SiteBanner />
    </div>
  );
}
